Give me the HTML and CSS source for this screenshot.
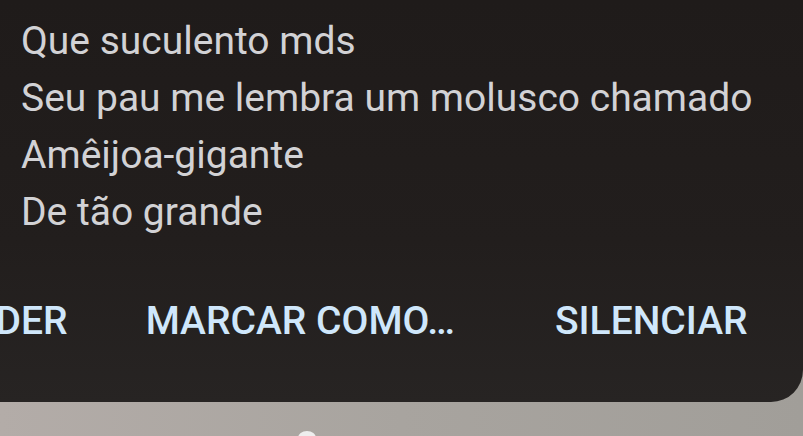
FILE: index.html
```
<!DOCTYPE html>
<html lang="pt">
<head>
    <meta charset="UTF-8">
    <meta name="viewport" content="width=device-width, initial-scale=1.0">
    <title>Notificação</title>
    <link rel="stylesheet" href="styles.css">
</head>
<body>
    <div class="card">
        <div class="message">
            <p>Que suculento mds</p>
            <p>Seu pau me lembra um molusco chamado</p>
            <p>Amêijoa-gigante</p>
            <p>De tão grande</p>
        </div>
        <div class="actions">
            <button class="action first">RESPONDER</button>
            <button class="action">MARCAR COMO…</button>
            <button class="action">SILENCIAR</button>
        </div>
    </div>
    <div class="shade">
        <div class="handle"></div>
    </div>
</body>
</html>
```

FILE: styles.css
```
html, body {
    margin: 0;
    height: 100%;
    overflow: hidden;
}
body {
    font-family: Roboto, "Noto Sans", sans-serif;
    background: linear-gradient(90deg, #b3aca8 0%, #a8a49f 50%, #a19e99 100%);
    display: flex;
    flex-direction: column;
}
.card {
    height: 402px;
    flex-shrink: 0;
    background: linear-gradient(180deg, #1f1b1a 0%, #221e1d 60%, #272423 100%);
    border-bottom-right-radius: 32px;
    display: flex;
    flex-direction: column;
}
.message {
    padding: 13px 0 0 21px;
}
.message p {
    margin: 0;
    font-size: 39px;
    line-height: 57px;
    color: #d2d2d5;
}
.actions {
    display: flex;
    margin-top: 58px;
}
.action {
    background: none;
    border: none;
    padding: 0;
    font-family: inherit;
    font-size: 39px;
    font-weight: 500;
    color: #cfe7fb;
    line-height: 44px;
    white-space: nowrap;
}
.action.first {
    margin-left: -154px;
    margin-right: 78px;
}
.action:last-child {
    margin-left: 100px;
}
.shade {
    flex: 1;
    position: relative;
}
.handle {
    position: absolute;
    left: 298px;
    top: 29px;
    width: 18px;
    height: 14px;
    border-radius: 50%;
    background: #eeeeee;
}
```
